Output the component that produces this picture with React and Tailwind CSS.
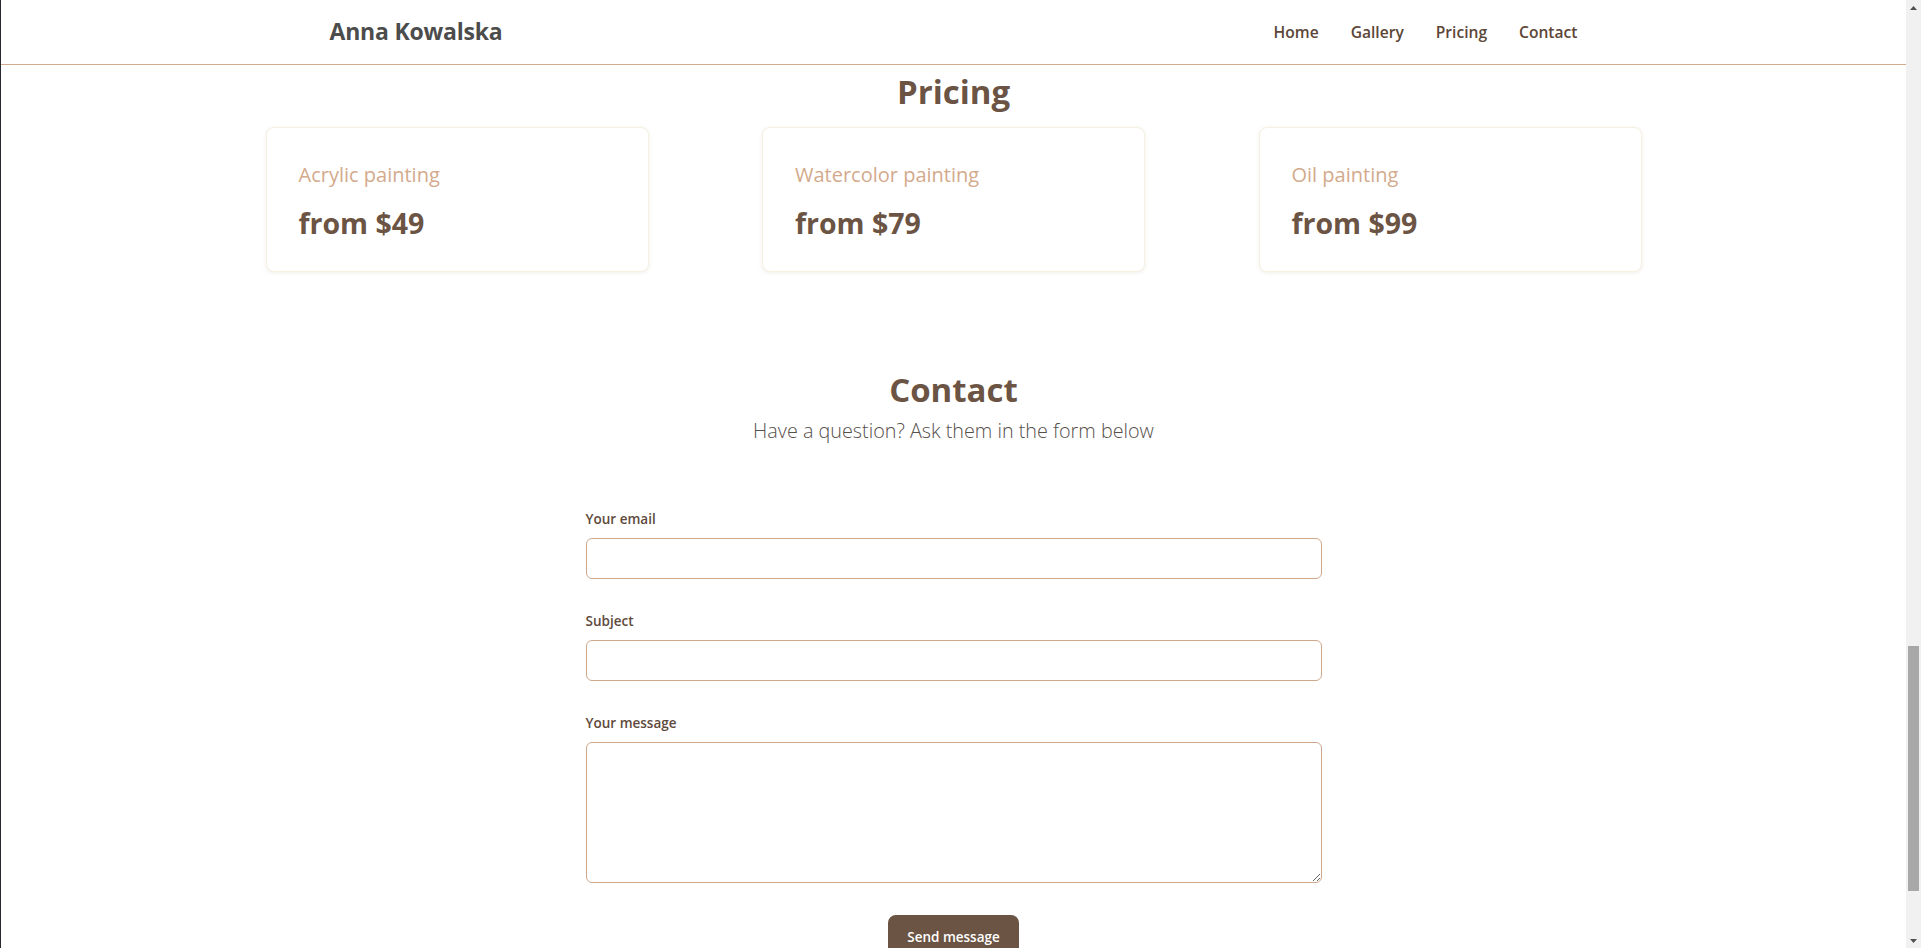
import React from "react";

const font = { fontFamily: '"Open Sans", "Noto Sans", sans-serif' };

function PriceCard({ title, price }) {
  return (
    <div className="w-[383px] h-[145px] rounded-lg border border-[#f7f0e1] bg-white px-8 pt-[33px] shadow-[0_1px_4px_rgba(120,100,60,0.10)]">
      <div className="text-[20px] leading-[28px] text-[#d3aa8c]">{title}</div>
      <div className="mt-[14px] text-[28.5px] leading-[40px] font-bold text-[#6b5444]">{price}</div>
    </div>
  );
}

function Field({ label, children }) {
  return (
    <div className="flex flex-col">
      <label className="text-[13.5px] leading-[20px] font-semibold text-[#5e4a3c]">{label}</label>
      <div className="mt-[9px]">{children}</div>
    </div>
  );
}

function Scrollbar() {
  return (
    <div className="w-[15px] h-full bg-[#f1f1f1] flex flex-col">
      <div className="h-[15px] flex items-center justify-center">
        <svg width="7" height="4" viewBox="0 0 7 4"><polygon points="3.5,0 7,4 0,4" fill="#505050" /></svg>
      </div>
      <div className="flex-1 flex flex-col">
        <div className="mt-[631px] ml-[2px] w-[11px] h-[245px] bg-[#a8a8a8]" />
      </div>
      <div className="h-[15px] flex items-center justify-center">
        <svg width="7" height="4" viewBox="0 0 7 4"><polygon points="0,0 7,0 3.5,4" fill="#505050" /></svg>
      </div>
    </div>
  );
}

export default function App() {
  return (
    <div style={font} className="flex h-[948px] w-full overflow-hidden bg-white border-l border-[#262a30]">
      <div className="flex-1 flex flex-col min-w-0">
        <header className="h-[65px] shrink-0 border-b border-[#d2ab8e]">
          <div className="max-w-[1280px] h-full mx-auto px-4 flex items-center justify-between">
            <div className="text-[23px] font-bold text-[#4c4c4c] tracking-[-0.2px] -mt-[1px]">Anna Kowalska</div>
            <nav className="flex gap-8 text-[15.6px] font-semibold text-[#5b4638] mt-[1px]">
              <span>Home</span>
              <span>Gallery</span>
              <span>Pricing</span>
              <span>Contact</span>
            </nav>
          </div>
        </header>

        <main className="flex flex-col items-center">
          <h2 className="mt-[7px] text-[33px] leading-[40px] font-bold text-[#6b5444]">Pricing</h2>
          <div className="mt-[15px] w-[1376px] flex justify-between">
            <PriceCard title="Acrylic painting" price="from $49" />
            <PriceCard title="Watercolor painting" price="from $79" />
            <PriceCard title="Oil painting" price="from $99" />
          </div>

          <h2 className="mt-[98px] text-[33px] leading-[40px] font-bold text-[#6b5444]">Contact</h2>
          <p className="mt-[7px] text-[19.8px] leading-[28px] font-light text-[#56504c]">
            Have a question? Ask them in the form below
          </p>

          <form className="mt-[64px] w-[736px] flex flex-col gap-[32px]">
            <Field label="Your email">
              <input type="email" className="block w-full h-[41px] rounded-md border border-[#cfa88b] bg-white px-3 outline-none" />
            </Field>
            <Field label="Subject">
              <input type="text" className="block w-full h-[41px] rounded-md border border-[#cfa88b] bg-white px-3 outline-none" />
            </Field>
            <Field label="Your message">
              <textarea className="block w-full h-[141px] rounded-md border border-[#cfa88b] bg-white px-3 py-2 outline-none" />
            </Field>
            <div className="flex justify-center">
              <button type="button" className="h-[44px] px-[19px] rounded-lg bg-[#6b5444] text-white text-[13.5px] font-semibold">
                Send message
              </button>
            </div>
          </form>
        </main>
      </div>
      <Scrollbar />
    </div>
  );
}
